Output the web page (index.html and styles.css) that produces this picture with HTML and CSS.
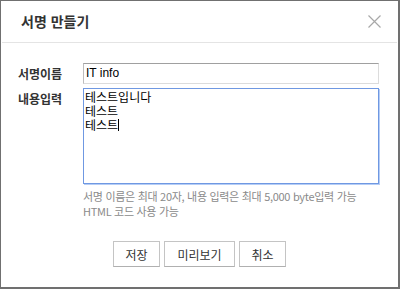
FILE: index.html
```html
<!DOCTYPE html>
<html lang="ko">
<head>
    <meta charset="UTF-8">
    <title>서명 만들기</title>
    <link rel="stylesheet" href="styles.css">
</head>
<body>
    <div class="dialog">
        <div class="dialog-head">
            <h1>서명 만들기</h1>
            <span class="close">
                <svg width="13" height="13" viewBox="0 0 13 13">
                    <path d="M0.5 0.5 L12.5 12.5 M12.5 0.5 L0.5 12.5" stroke="#a8a8a8" stroke-width="1.2" fill="none"/>
                </svg>
            </span>
        </div>
        <div class="dialog-body">
            <div class="row">
                <label class="row-label">서명이름</label>
                <div class="field">IT info</div>
            </div>
            <div class="row row-top">
                <label class="row-label">내용입력</label>
                <div class="area">테스트입니다<br>테스트<br>테스트<span class="caret"></span></div>
            </div>
            <p class="help">서명 이름은 최대 20자, 내용 입력은 최대 5,000 byte입력 가능<br>HTML 코드 사용 가능</p>
            <div class="buttons">
                <button class="btn btn-small">저장</button>
                <button class="btn btn-wide">미리보기</button>
                <button class="btn btn-small">취소</button>
            </div>
        </div>
    </div>
</body>
</html>
```

FILE: styles.css
```css
html, body {
    margin: 0;
    padding: 0;
    background: #fff;
}
.dialog {
    width: 400px;
    height: 289px;
    box-sizing: border-box;
    border: 1px solid #707070;
    border-right-width: 2px;
    border-bottom-width: 2px;
    background: #fff;
    font-family: "Noto Sans CJK KR", "Noto Sans", sans-serif;
    color: #333;
}
.dialog-head {
    height: 41px;
    margin: 0 1px;
    border-bottom: 1px solid #e4e4e4;
    display: flex;
    align-items: center;
    justify-content: space-between;
    padding: 0 16px 0 19px;
}
.dialog-head h1 {
    margin: 0;
    font-size: 14px;
    font-weight: bold;
    color: #333;
    line-height: 16px;
    padding-bottom: 1px;
}
.close {
    display: flex;
    width: 13px;
    height: 13px;
}
.dialog-body {
    padding: 20px 19px 0 17px;
}
.row {
    display: flex;
    align-items: center;
}
.row-top {
    align-items: flex-start;
    margin-top: 4px;
}
.row-label {
    width: 65px;
    flex-shrink: 0;
    font-size: 12px;
    font-weight: bold;
    color: #333;
    line-height: 16px;
}
.row-top .row-label {
    padding-top: 3px;
}
.field {
    flex: 1;
    height: 21px;
    box-sizing: border-box;
    border: 1px solid #dcdcdc;
    border-top-color: #a0a0a0;
    border-left-color: #bdbdbd;
    padding: 0 2px;
    font-family: "Liberation Sans", "Noto Sans CJK KR", sans-serif;
    font-size: 12px;
    line-height: 19px;
    color: #000;
}
.area {
    flex: 1;
    height: 96px;
    box-sizing: border-box;
    border: 1px solid #6f98e2;
    box-shadow: 1px 1px 0 #b5cdf6;
    padding: 1px 1px;
    font-size: 12px;
    line-height: 14px;
    color: #000;
}
.caret {
    display: inline-block;
    width: 1px;
    height: 12px;
    background: #000;
    vertical-align: -1px;
}
.help {
    margin: 5px 0 0 65px;
    font-size: 11px;
    line-height: 15px;
    color: #8a8a8a;
    letter-spacing: -0.3px;
}
.buttons {
    display: flex;
    justify-content: center;
    gap: 4px;
    margin-top: 22px;
    padding-left: 2px;
}
.btn {
    height: 26px;
    box-sizing: border-box;
    border: 1px solid #c4c4c4;
    border-bottom-color: #b0b0b0;
    background: #fff;
    font-family: "Noto Sans CJK KR", sans-serif;
    font-size: 12px;
    color: #333;
    padding: 0;
}
.btn-small {
    width: 47px;
}
.btn-wide {
    width: 71px;
}
```
